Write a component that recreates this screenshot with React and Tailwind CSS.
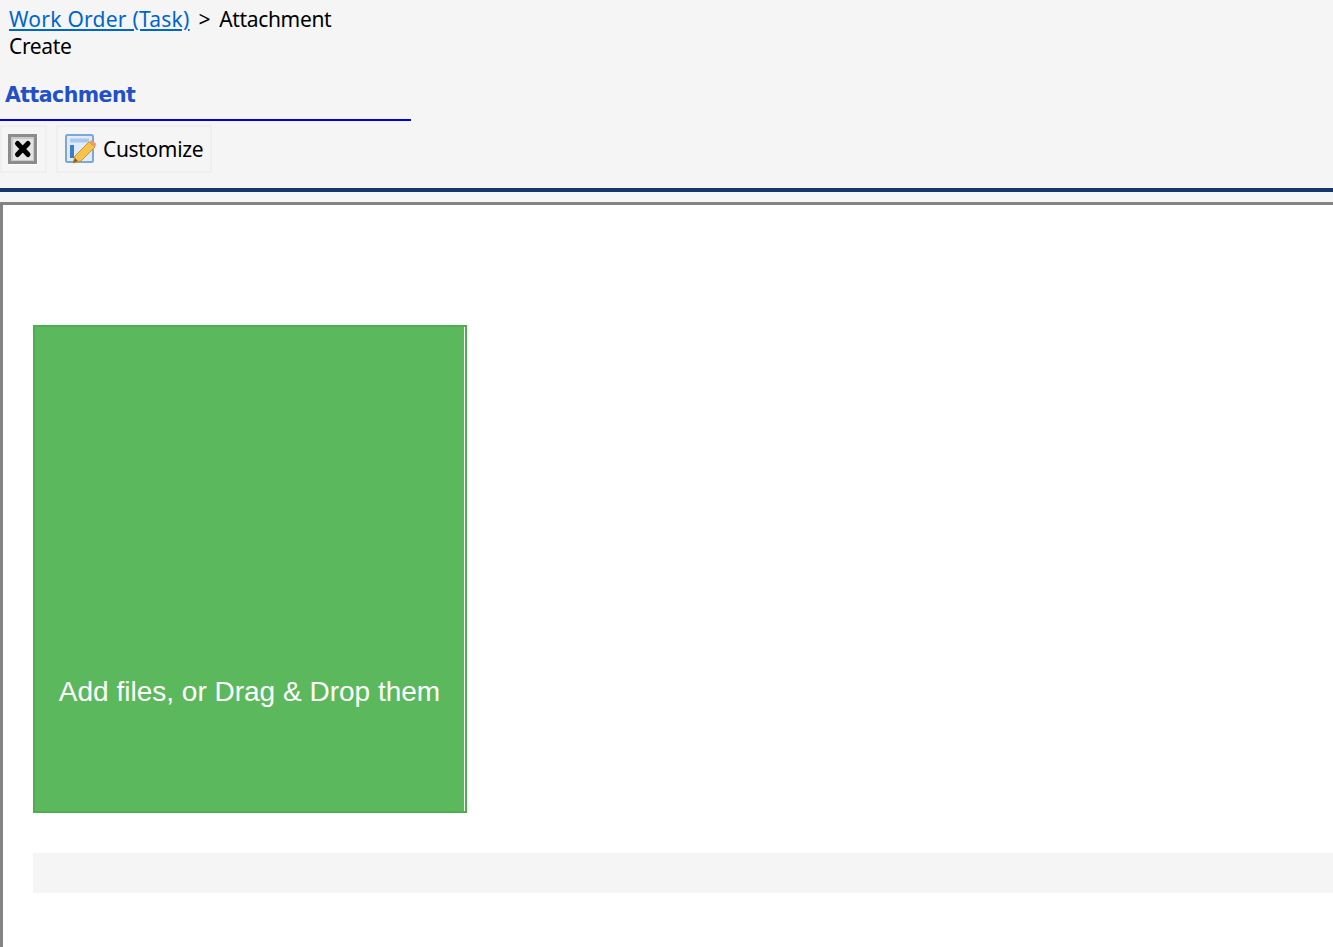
import React from 'react';

const CloseIcon = () => (
  <svg width="30" height="31" viewBox="0 0 30 31" className="block blur-[0.5px]">
    <rect x="0" y="0" width="30" height="31" fill="#fcfcfc" />
    <rect x="0" y="0" width="29" height="30" fill="#8c8c8c" />
    <rect x="3" y="3" width="23" height="24" fill="#c9c9c9" />
    <rect x="5" y="5" width="20" height="21" fill="#e4e4e4" />
    <path d="M9.5 9.5 L20 20.5 M20 9.5 L9.5 20.5" stroke="#000" strokeWidth="5" strokeLinecap="round" />
  </svg>
);

const CustomizeIcon = () => (
  <svg width="32" height="32" viewBox="0 0 32 32" className="block blur-[0.5px]">
    <rect x="1" y="2" width="27" height="27" rx="1.5" fill="#dfeafa" stroke="#7fa6d8" strokeWidth="2" />
    <rect x="5" y="5.5" width="19" height="4" fill="#a9c8ec" />
    <rect x="5" y="12" width="4" height="13" fill="#3f7cc4" />
    <path d="M8 30 L10 23 L24 9 L30 14 L16 28 Z" fill="#f5c44f" stroke="#d0922f" strokeWidth="1" />
    <path d="M24 9 L26.5 7 L31.5 11 L30 14 Z" fill="#e9a071" />
    <path d="M8 30 L10 25 L13 28 Z" fill="#8a5a2b" />
  </svg>
);

const App = () => {
  return (
    <div className="h-[947px] overflow-hidden bg-[#f5f5f5] font-['Noto_Sans','DejaVu_Sans',sans-serif]">
      {/* Breadcrumb */}
      <div className="h-[188px]">
        <div className="pl-[9px] pt-[6px] text-[21px] leading-[27px] text-black tracking-[-0.35px]">
          <div className="whitespace-nowrap">
            <a href="#" className="text-[#0066cc] underline tracking-[0.25px]">Work Order (Task)</a>
            <span className="ml-[9px]">&gt;</span>
            <span className="ml-[9px]">Attachment</span>
          </div>
          <div>Create</div>
        </div>

        <div className="mt-[22px] h-[39px] w-[411px] border-b-2 border-[#0000e6] pl-[5px]">
          <span className="font-['DejaVu_Sans',sans-serif] text-[20.5px] leading-[27px] font-bold tracking-[-0.55px] text-[#2250c8]">Attachment</span>
        </div>

        {/* Toolbar */}
        <div className="mt-[4px] flex gap-[9px]">
          <button className="flex h-[48px] w-[47px] items-center border-2 border-[#efefef] pl-[6px]">
            <CloseIcon />
          </button>
          <button className="flex h-[48px] w-[156px] items-center gap-[6px] border-2 border-[#efefef] pl-[7px] text-[21px] tracking-[-0.35px] text-black">
            <CustomizeIcon />
            <span className="pt-[2px]">Customize</span>
          </button>
        </div>
      </div>

      <div className="h-[4px] bg-[#17356e]" />

      {/* Frame */}
      <div className="mt-[10px] h-[745px] border-t-[3px] border-l-[3px] border-[#848484] bg-white pl-[30px] pt-[120px]">
        <div className="h-[488px] w-[434px] border-2 border-[#4cae4c]">
          <div className="flex h-full flex-col items-center border-r border-white bg-[#5cb85c] pt-[348px]">
            <span className="font-['Liberation_Sans',sans-serif] text-[28px] leading-[34px] text-white">Add files, or Drag &amp; Drop them</span>
          </div>
        </div>
        <div className="mt-[40px] h-[40px] bg-[#f5f5f5]" />
      </div>
    </div>
  );
};

export default App;
